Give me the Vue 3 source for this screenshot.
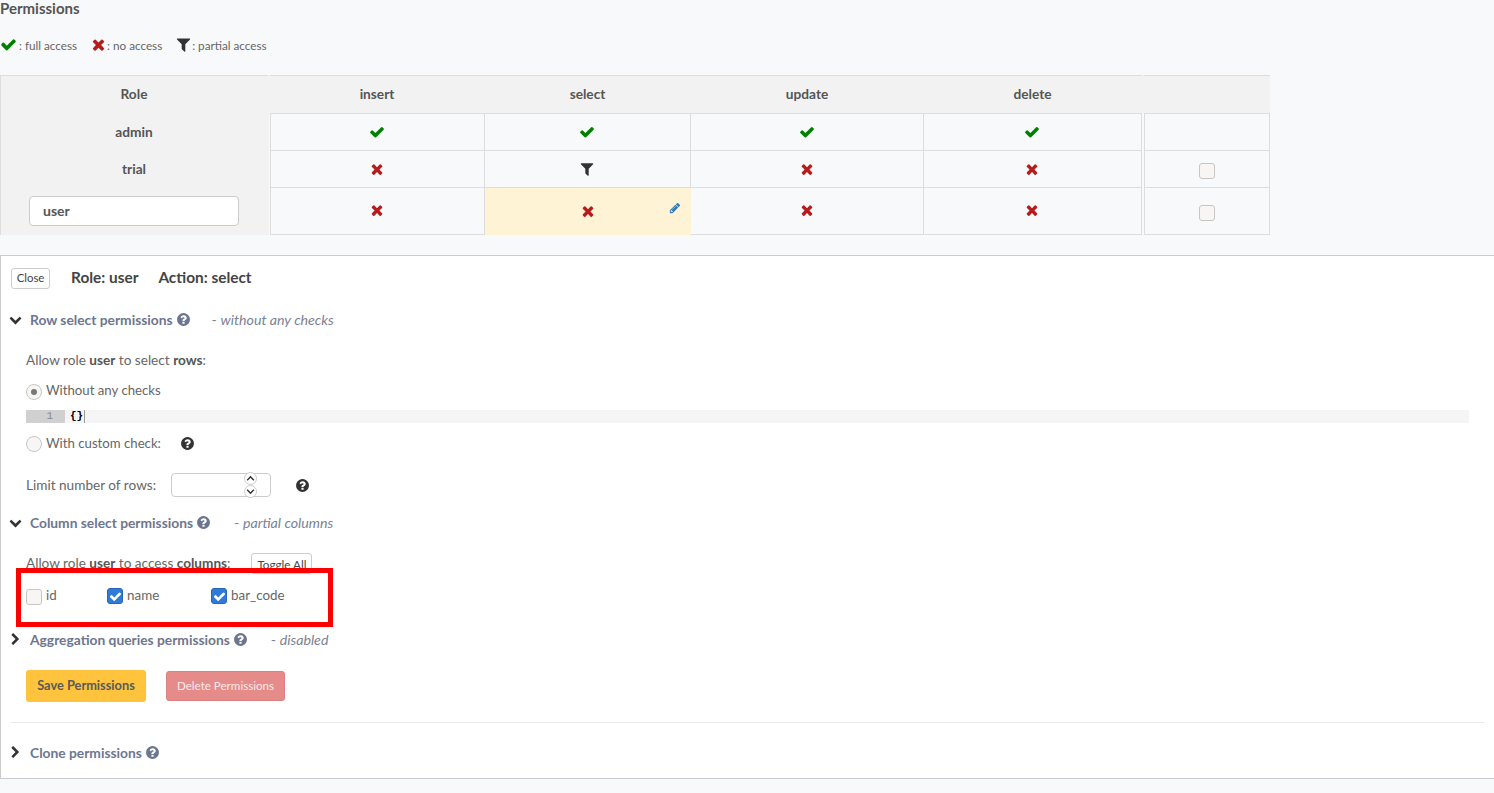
<template>
  <div class="page">
    <div class="title">Permissions</div>
    <div class="legend">
      <span class="legend-item">
        <svg class="ic ic-legend green" viewBox="0 0 1792 1792"><path :d="icons.check" /></svg>
        : full access
      </span>
      <span class="legend-item">
        <svg class="ic ic-legend red" viewBox="0 0 1792 1792"><path :d="icons.times" /></svg>
        : no access
      </span>
      <span class="legend-item">
        <svg class="ic ic-legend dark" viewBox="0 0 1792 1792"><path :d="icons.filter" /></svg>
        : partial access
      </span>
    </div>

    <div class="perm-table">
      <div class="head">Role</div>
      <div class="head spacer"></div>
      <div v-for="a in actions" :key="a" class="head">{{ a }}</div>
      <div class="head spacer"></div>
      <div class="head"></div>

      <template v-for="row in rows" :key="row.name">
        <div class="role" :class="{ tall: row.input }">
          <input v-if="row.input" class="role-input" :value="row.name" />
          <template v-else>{{ row.name }}</template>
        </div>
        <div class="role-gap"></div>
        <div
          v-for="(cell, i) in row.cells"
          :key="i"
          class="cell"
          :class="{ first: i === 0, active: row.input && i === 1, low: row.input }"
        >
          <svg class="ic ic-cell" :class="colours[cell]" viewBox="0 0 1792 1792"><path :d="icons[cell]" /></svg>
          <svg v-if="row.input && i === 1" class="ic pencil" viewBox="0 0 1792 1792"><path :d="icons.pencil" /></svg>
        </div>
        <div></div>
        <div class="cell first">
          <span v-if="row.name !== 'admin'" class="box"></span>
        </div>
      </template>
    </div>

    <div class="panel">
      <div class="top-row">
        <button class="btn close">Close</button>
        <b class="crumb role-crumb">Role: user</b>
        <b class="crumb">Action: select</b>
      </div>

      <div class="section sec-row">
        <svg class="ic chev" viewBox="0 0 1792 1792"><path :d="icons.down" /></svg>
        <span class="sec-title">Row select permissions</span>
        <svg class="ic help slate" viewBox="0 0 1792 1792"><path :d="icons.help" /></svg>
        <span class="status">- <i>without any checks</i></span>
      </div>

      <div class="line allow-row">Allow role&nbsp;<b>user</b>&nbsp;to select&nbsp;<b>rows</b>:</div>
      <label class="line radio-row">
        <span class="radio on"></span>Without any checks
      </label>
      <div class="code">
        <span class="gutter">1</span>
        <span class="braces">{}</span>
      </div>
      <label class="line custom-row">
        <span class="radio"></span>With custom check:
        <svg class="ic help dark custom-help" viewBox="0 0 1792 1792"><path :d="icons.help" /></svg>
      </label>
      <div class="line limit-row">
        Limit number of rows:
        <span class="limit">
          <span class="spin">
            <svg viewBox="0 0 10 10"><path d="M2 6.5 5 3.5l3 3" /></svg>
            <svg viewBox="0 0 10 10"><path d="M2 3.5l3 3 3-3" /></svg>
          </span>
        </span>
        <svg class="ic help dark limit-help" viewBox="0 0 1792 1792"><path :d="icons.help" /></svg>
      </div>

      <div class="section sec-col">
        <svg class="ic chev" viewBox="0 0 1792 1792"><path :d="icons.down" /></svg>
        <span class="sec-title">Column select permissions</span>
        <svg class="ic help slate" viewBox="0 0 1792 1792"><path :d="icons.help" /></svg>
        <span class="status status-wide">- <i>partial columns</i></span>
      </div>

      <div class="line access-row">
        Allow role&nbsp;<b>user</b>&nbsp;to access&nbsp;<b>columns</b>:
        <button class="btn toggle">Toggle All</button>
      </div>
      <div class="line columns">
        <label v-for="c in columns" :key="c.name" class="col-item" :style="{ width: c.width + 'px' }">
          <span class="box" :class="{ checked: c.on }">
            <svg v-if="c.on" class="ic tick" viewBox="0 0 1792 1792"><path :d="icons.check" /></svg>
          </span>
          {{ c.name }}
        </label>
      </div>

      <div class="section sec-agg">
        <svg class="ic chev" viewBox="0 0 1792 1792"><path :d="icons.right" /></svg>
        <span class="sec-title">Aggregation queries permissions</span>
        <svg class="ic help slate" viewBox="0 0 1792 1792"><path :d="icons.help" /></svg>
        <span class="status status-wide">- <i>disabled</i></span>
      </div>

      <div class="actions">
        <button class="save">Save Permissions</button>
        <button class="delete">Delete Permissions</button>
      </div>

      <div class="rule"></div>

      <div class="section sec-clone">
        <svg class="ic chev" viewBox="0 0 1792 1792"><path :d="icons.right" /></svg>
        <span class="sec-title">Clone permissions</span>
        <svg class="ic help slate" viewBox="0 0 1792 1792"><path :d="icons.help" /></svg>
      </div>
    </div>

    <div class="annotation"></div>
  </div>
</template>

<script setup>
const icons = {
  check: "M1671 566q0 40-28 68l-724 724-136 136q-28 28-68 28t-68-28l-136-136-362-362q-28-28-28-68t28-68l136-136q28-28 68-28t68 28l294 295 656-657q28-28 68-28t68 28l136 136q28 28 28 68z",
  times: "M1490 1322q0 40-28 68l-136 136q-28 28-68 28t-68-28l-294-294-294 294q-28 28-68 28t-68-28l-136-136q-28-28-28-68t28-68l294-294-294-294q-28-28-28-68t28-68l136-136q28-28 68-28t68 28l294 294 294-294q28-28 68-28t68 28l136 136q28 28 28 68t-28 68l-294 294 294 294q28 28 28 68z",
  filter: "M1595 295q17 41-14 70l-493 493v742q0 42-39 59-13 5-25 5-27 0-45-19l-256-256q-19-19-19-45v-486l-493-493q-31-29-14-70 17-39 59-39h1280q42 0 59 39z",
  pencil: "M491 1536l91-91-235-235-91 91v107h128v128h107zm523-928q0-22-22-22-10 0-17 7l-542 542q-7 7-7 17 0 22 22 22 10 0 17-7l542-542q7-7 7-17zm-54-192l416 416-832 832h-416v-416zm683 96q0 53-37 90l-166 166-416-416 166-165q36-38 90-38 53 0 91 38l235 234q37 39 37 91z",
  help: "M1024 1376v-192q0-14-9-23t-23-9h-192q-14 0-23 9t-9 23v192q0 14 9 23t23 9h192q14 0 23-9t9-23zm256-672q0-88-55.5-163t-138.5-116-170-41q-243 0-371 213-15 24 8 42l132 100q7 6 19 6 16 0 25-12 53-68 86-92 34-24 86-24 48 0 85.5 26t37.5 59q0 38-20 61t-68 45q-63 28-115.5 86.5t-52.5 125.5v36q0 14 9 23t23 9h192q14 0 23-9t9-23q0-19 21.5-49.5t54.5-49.5q32-18 49-28.5t46-35 44.5-48 28-60.5 12.5-81zm384 192q0 209-103 385.5t-279.5 279.5-385.5 103-385.5-103-279.5-279.5-103-385.5 103-385.5 279.5-279.5 385.5-103 385.5 103 279.5 279.5 103 385.5z",
  down: "M1683 808l-742 741q-19 19-45 19t-45-19l-742-741q-19-19-19-45.5t19-45.5l166-165q19-19 45-19t45 19l531 531 531-531q19-19 45-19t45 19l166 165q19 19 19 45.5t-19 45.5z",
  right: "M1363 877l-742 742q-19 19-45 19t-45-19l-166-166q-19-19-19-45t19-45l531-531-531-531q-19-19-19-45t19-45l166-166q19-19 45-19t45 19l742 742q19 19 19 45t-19 45z",
};

const colours = { check: "green", times: "red", filter: "dark" };

const actions = ["insert", "select", "update", "delete"];

const rows = [
  { name: "admin", cells: ["check", "check", "check", "check"] },
  { name: "trial", cells: ["times", "filter", "times", "times"] },
  { name: "user", input: true, cells: ["times", "times", "times", "times"] },
];

const columns = [
  { name: "id", on: false, width: 81 },
  { name: "name", on: true, width: 104 },
  { name: "bar_code", on: true, width: 90 },
];
</script>

<style>
html,
body {
  background: #f8f9fb;
}
</style>

<style scoped>
.page {
  position: relative;
  height: 793px;
  font-family: "Lato", "Noto Sans", sans-serif;
  font-size: 13.2px;
  color: #555;
  overflow: hidden;
}

.ic {
  display: block;
  fill: currentColor;
  flex: none;
}
.green {
  color: #008000;
}
.red {
  color: #b71c1c;
}
.dark {
  color: #333;
}
.slate {
  color: #6d7690;
}

.title {
  height: 17px;
  font-size: 15px;
  font-weight: 700;
  line-height: 17px;
}

.legend {
  box-sizing: border-box;
  display: flex;
  align-items: center;
  height: 20px;
  margin-top: 19px;
  padding-bottom: 2px;
  font-size: 11.7px;
  color: #666;
}
.legend-item {
  display: flex;
  align-items: center;
  gap: 2px;
  margin-right: 11px;
}
.ic-legend {
  width: 17px;
  height: 17px;
  margin-top: -2px;
}
.legend-item + .legend-item .ic-legend {
  margin: -2px -2px 0 2px;
}

.perm-table {
  display: grid;
  grid-template-columns: 268px 2px 215px 206px 233px 218px 2px 126px;
  grid-template-rows: 38px 37px 37px 48px;
  margin-top: 19px;
  width: 1270px;
}
.head {
  display: flex;
  align-items: center;
  justify-content: center;
  padding: 0 1px 2px 0;
  background: #f2f2f2;
  border-top: 1px solid #ddd;
  font-size: 13.7px;
  font-weight: 700;
}
.head:first-child {
  border-left: 1px solid #ddd;
}
.head.spacer {
  padding: 0;
  border-top: 0;
}
.role {
  display: flex;
  align-items: center;
  justify-content: center;
  padding-right: 1px;
  background: #f2f2f2;
  border-left: 1px solid #ddd;
  font-size: 13.7px;
  font-weight: 700;
}
.role-gap {
  background: #f2f2f2;
  background-clip: content-box;
  padding-right: 1px;
}
.role-input {
  box-sizing: border-box;
  width: 210px;
  height: 30px;
  padding: 0 13px 2px;
  border: 1px solid #ccc;
  border-radius: 4px;
  background: #fff;
  font: inherit;
  font-size: 14px;
  color: #555;
}
.cell {
  position: relative;
  display: flex;
  align-items: center;
  justify-content: center;
  padding-right: 1px;
  border-top: 1px solid #ddd;
  border-right: 1px solid #ddd;
}
.cell.first {
  border-left: 1px solid #ddd;
}
.perm-table > .cell:nth-last-child(-n + 6) {
  border-bottom: 1px solid #ddd;
}
.cell.active {
  background: #fff3d6;
  border-right: 0;
  border-bottom: 0 !important;
}
.ic-cell {
  width: 16px;
  height: 16px;
}
.cell.low .ic-cell {
  margin-bottom: 2px;
}
.pencil {
  position: absolute;
  top: 14px;
  right: 10px;
  width: 12px;
  height: 12px;
  color: #337ab7;
}

.box {
  box-sizing: border-box;
  display: inline-flex;
  align-items: center;
  justify-content: center;
  flex: none;
  width: 16px;
  height: 16px;
  border: 1px solid #c8c6c2;
  border-radius: 3px;
  background: #f7f6f4;
  margin-top: 3px;
}
.box.checked {
  border-color: #2566b8;
  background: #2f7bd9;
  margin-top: 2px;
}
.tick {
  width: 13px;
  height: 13px;
  color: #fff;
}

.panel {
  box-sizing: border-box;
  height: 524px;
  margin-top: 20px;
  padding: 12px 10px 0;
  background: #fff;
  border: 1px solid #ccc;
  border-right: 0;
}

.top-row {
  display: flex;
  align-items: center;
  height: 21px;
}
.btn {
  box-sizing: border-box;
  border: 1px solid #ccc;
  border-radius: 3px;
  background: #fff;
  font: inherit;
  font-size: 11.4px;
  color: #444;
  padding: 0;
}
.close {
  width: 39px;
  height: 21px;
  padding-bottom: 2px;
}
.crumb {
  font-size: 15.4px;
  line-height: 20px;
  margin-top: -4px;
  color: #444;
}
.role-crumb {
  margin-left: 21px;
  margin-right: 20px;
}

.section {
  box-sizing: border-box;
  display: flex;
  align-items: center;
  height: 20px;
  padding-bottom: 2px;
}
.chev {
  width: 13px;
  height: 13px;
  color: #333;
  margin-left: -2px;
  margin-right: 8px;
}
.sec-title {
  font-size: 13.8px;
  font-weight: 700;
  color: #6d7690;
}
.help {
  width: 15px;
  height: 15px;
}
.section .help {
  margin-left: 3px;
}
.status {
  margin-left: 21px;
  font-size: 14.2px;
  color: #7a8296;
}
.status-wide {
  margin-left: 23px;
}

.sec-row {
  margin-top: 21px;
}
.line {
  display: flex;
  align-items: center;
  height: 20px;
  margin-left: 15px;
  color: #666;
}
.line b {
  color: #555;
}
.allow-row {
  margin-top: 20px;
  font-size: 13.6px;
}
.radio-row {
  box-sizing: border-box;
  margin-top: 11px;
  padding-bottom: 2px;
}
.radio {
  box-sizing: border-box;
  position: relative;
  display: inline-block;
  flex: none;
  width: 16px;
  height: 16px;
  margin: 1px 4px 0 0;
  border: 1px solid #c8c6c2;
  border-radius: 50%;
  background: #f7f6f4;
}
.radio-row .radio {
  margin-top: 3px;
}
.radio.on::after {
  content: "";
  position: absolute;
  top: 4px;
  left: 4px;
  width: 6px;
  height: 6px;
  border-radius: 50%;
  background: #777;
}

.code {
  display: flex;
  align-items: center;
  height: 13px;
  margin: 9px 15px 0;
  background: #f5f5f5;
  font-family: "Liberation Mono", monospace;
  font-size: 11px;
}
.gutter {
  box-sizing: border-box;
  width: 39px;
  height: 13px;
  padding-right: 12px;
  background: #d0d0d0;
  color: #888;
  text-align: right;
  line-height: 13px;
}
.braces {
  margin-left: 5px;
  padding-right: 1px;
  border-right: 1px solid #999;
  color: #000;
  font-weight: 700;
  line-height: 13px;
}

.custom-row {
  margin-top: 10px;
}
.custom-help {
  margin-left: 19px;
}
.limit-row {
  height: 24px;
  margin-top: 20px;
  font-size: 13.6px;
}
.limit {
  box-sizing: border-box;
  position: relative;
  width: 100px;
  height: 24px;
  margin-left: 15px;
  border: 1px solid #ccc;
  border-radius: 4px;
  background: #fff;
}
.spin {
  position: absolute;
  top: -2px;
  left: 72px;
  display: flex;
  flex-direction: column;
}
.spin svg {
  box-sizing: border-box;
  width: 13px;
  height: 13px;
  border: 1px solid #ccc;
  border-radius: 50%;
  background: #fff;
  fill: none;
  stroke: #333;
  stroke-width: 1.3;
}
.limit-help {
  margin-left: 24px;
}

.sec-col {
  margin-top: 16px;
}
.access-row {
  height: 21px;
  margin-top: 20px;
  font-size: 13.6px;
  align-items: flex-start;
  line-height: 20px;
}
.toggle {
  width: 61px;
  height: 21px;
  margin-left: 21px;
  padding-bottom: 4px;
  font-size: 11.7px;
}
.columns {
  margin-top: 12px;
  font-size: 13.4px;
}
.col-item {
  display: flex;
  align-items: center;
  gap: 4px;
  padding-bottom: 2px;
}
.sec-agg {
  margin-top: 24px;
}

.actions {
  display: flex;
  align-items: center;
  gap: 20px;
  height: 32px;
  margin: 20px 0 0 15px;
}
.save {
  width: 120px;
  height: 32px;
  padding: 0 0 2px;
  border: 0;
  border-radius: 3px;
  background: #ffc33d;
  font: inherit;
  font-size: 12.8px;
  font-weight: 700;
  color: #5c5a52;
}
.delete {
  width: 119px;
  height: 30px;
  padding: 0 0 2px;
  border: 1px solid #dd8080;
  border-radius: 3px;
  background: #e58c8a;
  font: inherit;
  font-size: 11.6px;
  color: #fbe9e9;
}

.rule {
  height: 1px;
  margin-top: 20px;
  background: #e9e9e9;
}
.sec-clone {
  margin-top: 20px;
}

.annotation {
  position: absolute;
  top: 568px;
  left: 16px;
  box-sizing: border-box;
  width: 317px;
  height: 59px;
  border: 5px solid #f00;
  pointer-events: none;
}
</style>
